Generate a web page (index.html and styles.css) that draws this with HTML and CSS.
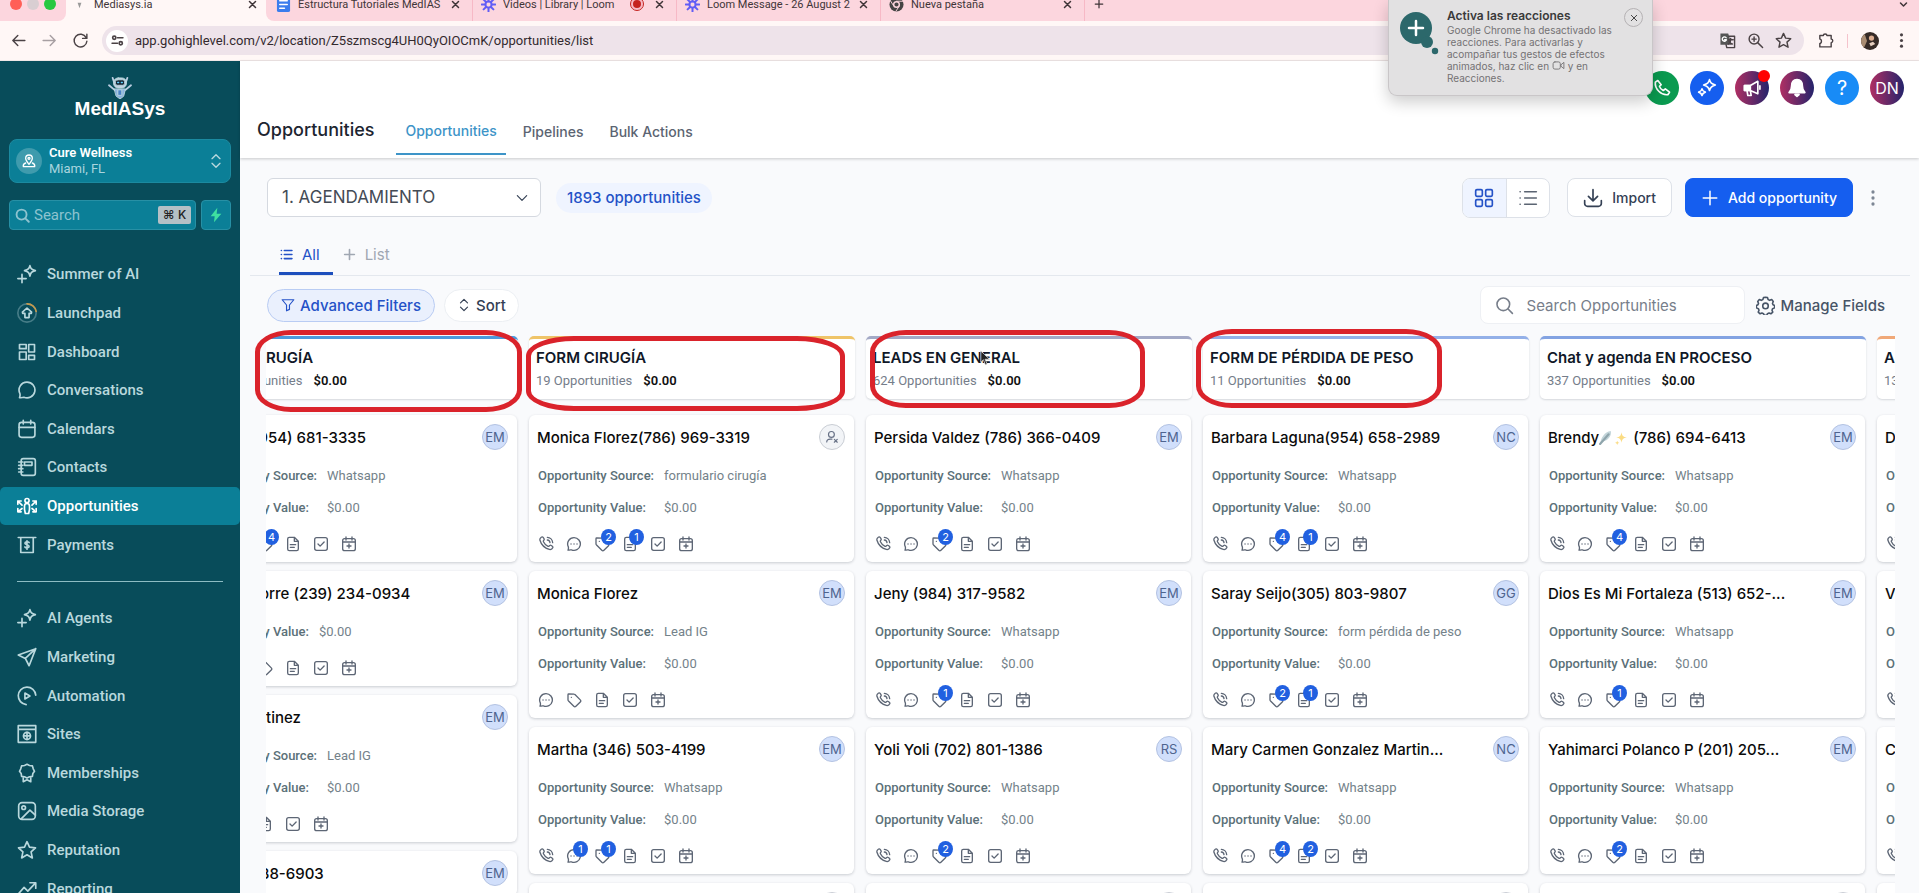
FILE: index.html
```html
<!DOCTYPE html>
<html lang="en">
<head>
<meta charset="utf-8">
<title>Mediasys.ia</title>
<link rel="stylesheet" href="styles.css">
</head>
<body>
<svg class="sprite" aria-hidden="true">
  <symbol id="phone" viewBox="0 0 24 24"><path d="M8.4 8.9a14 14 0 0 0 6.7 6.7c.6.1 1 0 1.500-.4l1-1c.8-.6 1.600-.5 2.300 0l1.600 1.200c1.200 1 1.100 2 0 3l-1 1c-1 .9-2.200 1.200-3.500.8A21 21 0 0 1 2.800 6c-.2-1.200.1-2.200 1-3l.9-.9c1-1 2.200-1 3 .1l1.300 1.800c.6.9.5 1.600-.2 2.300l-.6.7c-.4.6-.4 1.300.2 1.900zM14 2a8.500 8.500 0 0 1 8 8M14 6a4.500 4.500 0 0 1 4 4"/></symbol>
  <symbol id="chat" viewBox="0 0 24 24"><path d="M12 2.500a9.500 9.500 0 1 1-3.800 18.200c-1.700.2-3.200.6-5.200.6.7-1.800.9-3.300.5-5A9.500 9.500 0 0 1 12 2.500zM7.500 12h.1M12 12h.1M16.500 12h.1"/></symbol>
  <symbol id="tag" viewBox="0 0 24 24"><path d="M3 4a1 1 0 0 1 1-1l8 .2c.6 0 1 .2 1.400.6l8 8c1 1 1 2.200 0 3.200l-6.500 6.500c-1 1-2.200 1-3.200 0l-7.900-8A2 2 0 0 1 3 12zM8 8h.1"/></symbol>
  <symbol id="doc" viewBox="0 0 24 24"><path d="M14 2H6.500A2.500 2.500 0 0 0 4 4.500v15A2.500 2.500 0 0 0 6.500 22h11a2.500 2.500 0 0 0 2.500-2.500V8zM14 2v6h6M8 13h8M8 17h6"/></symbol>
  <symbol id="check" viewBox="0 0 24 24"><rect x="2.500" y="2.500" width="19" height="19" rx="3"/><path d="m7.500 12 3.200 3.200 6-6.200"/></symbol>
  <symbol id="calplus" viewBox="0 0 24 24"><rect x="2.500" y="4" width="19" height="18" rx="3"/><path d="M2.500 9h19M7.500 1.500V6M16.500 1.500V6M12 12v6M9 15h6"/></symbol>
  <symbol id="userx" viewBox="0 0 24 24"><circle cx="11" cy="7.500" r="5"/><path d="M3 20.500c0-3 2.500-5 6-5h3M16 16l5 5M21 16l-5 5"/></symbol>
  <symbol id="spark" viewBox="0 0 24 24"><path d="M15.500 2c1 3.800 2 4.800 6.500 6-4.500 1.200-5.500 2.200-6.500 6.500C14.500 10.200 13.500 9.200 9 8c4.500-1.200 5.500-2.200 6.500-6zM6 12.500v10M1 17.500h10"/></symbol>
  <symbol id="launch" viewBox="0 0 24 24"><circle cx="12" cy="12" r="11" opacity=".35"/><path d="M9.500 17.500v-5H6.800L6.500 11 12 6l5.500 5-.3 1.500h-2.700v5z"/><path class="arc" d="M12 1a11 11 0 0 1 11 9"/></symbol>
  <symbol id="dash" viewBox="0 0 24 24"><path d="M3 3h8v5H3zM3 12h8v9H3zM14 3h7v9h-7zM14 16h7v5h-7z"/></symbol>
  <symbol id="bubble" viewBox="0 0 24 24"><path d="M12 2.500a9.500 9.500 0 1 1-3.800 18.200c-1.700.2-3.200.6-5.200.6.7-1.800.9-3.300.5-5A9.500 9.500 0 0 1 12 2.500z"/></symbol>
  <symbol id="cal" viewBox="0 0 24 24"><rect x="2.500" y="4" width="19" height="18" rx="3"/><path d="M2.500 10h19M7.500 1.500V6M16.500 1.500V6"/></symbol>
  <symbol id="contacts" viewBox="0 0 24 24"><rect x="5" y="2" width="17" height="20" rx="2.500"/><path d="M9 6h9v4H9zM2 6h5M2 10h5M2 14h5M2 18h5"/></symbol>
  <symbol id="opps" viewBox="0 0 24 24"><circle cx="12" cy="5.500" r="2.500"/><path d="M9 12a3 3 0 0 1 6 0v4l-1 5h-4l-1-5zM1 10V6h4M1 6l5 5M23 10V6h-4M23 6l-5 5M1 15v4h4M1 19l5-4M23 15v4h-4M23 19l-5-4"/></symbol>
  <symbol id="pay" viewBox="0 0 24 24"><path d="M1.500 3h21M4.500 3v18h15V3M14.500 9c-1-1.300-5-1.200-5 .9 0 2.300 5 1.200 5 3.600 0 2.300-4 2.300-5 .8M12 7v10"/></symbol>
  <symbol id="send" viewBox="0 0 24 24"><path d="M22.500 2 1.500 9.500l8.500 4.200L14.500 22.500zM22.500 2 10 13.700"/></symbol>
  <symbol id="auto" viewBox="0 0 24 24"><path d="M11 22.300A10.500 10.500 0 1 1 22.500 11M9.500 8.500v7l6-3.500z"/></symbol>
  <symbol id="sites" viewBox="0 0 24 24"><path d="M1.500 2h21v20h-21zM1.500 6.500h21"/><circle cx="12" cy="14.300" r="4.200"/><path d="M8 14.300h8M12 10v8.500"/></symbol>
  <symbol id="award" viewBox="0 0 24 24"><path d="m12 1.500 3 1.500 3.500.5L19.500 7 21 10l-2 2.500-.5 3.500-3.500.5-3 1.500-3-1.500-3.500-.5-.5-3.500L3 10l1.500-3 1-3.500L9 3zM7.500 17v5.500L12 20l4.500 2.500V17"/></symbol>
  <symbol id="image" viewBox="0 0 24 24"><rect x="2" y="2" width="20" height="20" rx="4"/><circle cx="8" cy="8" r="2.200"/><path d="M5 21.500 15.500 11l6.500 6"/></symbol>
  <symbol id="star" viewBox="0 0 24 24"><path d="m12 2 3 6.600 7.200.8-5.300 4.900 1.500 7.200-6.400-3.700-6.400 3.700 1.500-7.200L1.800 9.400 9 8.600z"/></symbol>
  <symbol id="trend" viewBox="0 0 24 24"><path d="m1.500 18 7-8 4.500 4.500L22 5M15.500 4.500H22.500V11"/></symbol>
  <symbol id="x" viewBox="0 0 24 24"><path d="M4 4l16 16M20 4 4 20"/></symbol>
  <symbol id="plus" viewBox="0 0 24 24"><path d="M12 3v18M3 12h18"/></symbol>
  <symbol id="down" viewBox="0 0 24 24"><path d="m4 8 8 8 8-8"/></symbol>
  <symbol id="updown" viewBox="0 0 24 24"><path d="m6 8.500 6-6 6 6M6 15.500l6 6 6-6"/></symbol>
  <symbol id="mag" viewBox="0 0 24 24"><circle cx="10.500" cy="10.500" r="8"/><path d="m16.500 16.500 5.500 5.500"/></symbol>
  <symbol id="list" viewBox="0 0 24 24"><path d="M8 4.500h14M8 12h14M8 19.500h14M2.500 4.500h.1M2.500 12h.1M2.500 19.500h.1"/></symbol>
  <symbol id="dots" viewBox="0 0 24 24"><g fill="currentColor" stroke="none"><circle cx="12" cy="4" r="2.200"/><circle cx="12" cy="12" r="2.200"/><circle cx="12" cy="20" r="2.200"/></g></symbol>
  <symbol id="loom" viewBox="0 0 24 24"><g stroke-width="3.200"><path d="M12 1v6M12 17v6M1 12h6M17 12h6M4.200 4.200l4.300 4.300M15.500 15.500l4.300 4.300M19.800 4.200l-4.300 4.300M8.500 15.500l-4.300 4.300"/></g><circle cx="12" cy="12" r="5" stroke-width="3"/></symbol>
</svg>

<header class="browser">
  <div class="tabs">
    <div class="lights"><i class="red"></i><i class="grey"></i><i class="green"></i></div>
    <div class="tab active"><svg class="fav" viewBox="0 0 16 16"><path d="M6 6h4l-2 6z" fill="#9a9a9a" stroke="none"/></svg><span class="tab-t">Mediasys.ia</span><button class="tx" aria-label="Close tab"><svg><use href="#x"/></svg></button></div>
    <div class="tab"><svg class="fav" viewBox="0 0 16 16"><rect x="1" width="14" height="16" rx="2" fill="#3b7ded" stroke="none"/><path d="M4 4h8M4 8h8M4 12h5" stroke="#fff" stroke-width="1.600"/></svg><span class="tab-t">Estructura Tutoriales MedIAS</span><button class="tx" aria-label="Close tab"><svg><use href="#x"/></svg></button></div>
    <div class="tab"><svg class="fav loom"><use href="#loom"/></svg><span class="tab-t">Videos | Library | Loom</span><i class="rec"></i><button class="tx" aria-label="Close tab"><svg><use href="#x"/></svg></button></div>
    <div class="tab"><svg class="fav loom"><use href="#loom"/></svg><span class="tab-t">Loom Message - 26 August 2</span><button class="tx" aria-label="Close tab"><svg><use href="#x"/></svg></button></div>
    <div class="tab"><svg class="fav" viewBox="0 0 16 16"><circle cx="8" cy="8" r="7.500" fill="#444" stroke="none"/><circle cx="8" cy="8" r="3" fill="#444" stroke="#fcd6de" stroke-width="1.500"/><path d="M8 4.500h7M5 9.500 1.500 4M11 9.500 7.500 15" stroke="#fcd6de" stroke-width="1"/></svg><span class="tab-t">Nueva pestaña</span><button class="tx" aria-label="Close tab"><svg><use href="#x"/></svg></button></div>
    <button class="newtab" aria-label="New tab"><svg><use href="#plus"/></svg></button>
    <button class="tabmenu" aria-label="Search tabs"><svg><use href="#down"/></svg></button>
  </div>
  <div class="bar">
    <button aria-label="Back"><svg viewBox="0 0 24 24"><path d="M21 12H4M11 5l-7 7 7 7"/></svg></button>
    <button class="dim" aria-label="Forward"><svg viewBox="0 0 24 24"><path d="M3 12h17M13 5l7 7-7 7"/></svg></button>
    <button aria-label="Reload"><svg viewBox="0 0 24 24"><path d="M20 8a9 9 0 1 0 1 5M21 3v6h-6"/></svg></button>
    <div class="url">
      <span class="site"><svg viewBox="0 0 24 24"><circle cx="6" cy="7" r="3"/><path d="M12 7h10M2 17h10"/><circle cx="18" cy="17" r="3"/></svg></span>
      <input aria-label="Address" value="app.gohighlevel.com/v2/location/Z5szmscg4UH0QyOIOCmK/opportunities/list">
      <svg viewBox="0 0 24 24"><path d="M2 2h11l5 16H2z" fill="#555" stroke="none"/><path d="M14 6h8v16H11l-1-4M13 11h7M16.500 9v2c0 3-2 5-3.500 6M14 13c1 2 3 4 5 4"/><path d="M10 8a3 3 0 1 0 .5 3H8" stroke="#fff"/></svg>
      <svg viewBox="0 0 24 24"><circle cx="10" cy="10" r="7"/><path d="m15 15 7 7M10 7v6M7 10h6"/></svg>
      <svg><use href="#star"/></svg>
    </div>
    <svg class="ext" viewBox="0 0 24 24"><path d="M4 5h5c0-3 5-3 5 0h6v5c3 0 3 5 0 5v6H4v-5c3 0 3-6 0-6z"/></svg>
    <i class="vsep"></i>
    <svg class="me" viewBox="0 0 24 24"><circle cx="12" cy="12" r="12" fill="#352a26"/><path d="M0 12a12 12 0 0 1 5-9l3 9-4 9a12 12 0 0 1-4-9z" fill="#a98c72"/><circle cx="14" cy="8" r="3.500" fill="#dcae91"/><path d="M11 15l5-2 3 3-6 3z" fill="#e6cfc0"/></svg>
    <button aria-label="Menu"><svg><use href="#dots"/></svg></button>
  </div>
</header>

<div class="app">
  <aside class="side">
    <div class="logo">
      <svg viewBox="0 0 26 24"><path d="M5 1l2 6M21 1l-2 6M1 9l6 5M25 9l-6 5" stroke="#b9cce0" stroke-width="2"/><rect x="6" y="1" width="14" height="11" rx="5" fill="#c3d2e4"/><rect x="8" y="3" width="10" height="6" rx="2" fill="#182736"/><path d="M10.500 6h1M14.500 6h1" stroke="#5fd0ff" stroke-width="1.500"/><path d="M7 13h12l-2 8-4 3-4-3z" fill="#8cb2df"/><path d="M11 14h4v6h-4z" fill="#4b82c6"/></svg>
      <span>MedIASys</span>
    </div>
    <button class="account">
      <span class="pinc"><svg viewBox="0 0 24 24"><path d="M12 17c-3-3.500-5-6-5-9a5 5 0 0 1 10 0c0 3-2 5.500-5 9z"/><circle cx="12" cy="8" r="1.500"/><path d="M7 15c-3 1-4 3-3.500 5.500h17C21 18 20 16 17 15"/></svg></span>
      <span class="acc"><b>Cure Wellness</b><small>Miami, FL</small></span>
      <svg class="ud"><use href="#updown"/></svg>
    </button>
    <div class="find">
      <label class="sbox"><svg><use href="#mag"/></svg><input placeholder="Search" aria-label="Search"><kbd>⌘ K</kbd></label>
      <button class="bolt" aria-label="Quick actions"><svg viewBox="0 0 24 24"><path d="M14 1 4 14h6l-1 9L20 10h-7z" fill="#3fe0a0" stroke="none"/></svg></button>
    </div>
    <nav class="nav">
      <a href="#"><svg><use href="#spark"/></svg>Summer of AI</a>
      <a href="#"><svg><use href="#launch"/></svg>Launchpad</a>
      <a href="#"><svg><use href="#dash"/></svg>Dashboard</a>
      <a href="#"><svg><use href="#bubble"/></svg>Conversations</a>
      <a href="#"><svg><use href="#cal"/></svg>Calendars</a>
      <a href="#"><svg><use href="#contacts"/></svg>Contacts</a>
      <a href="#" class="on"><svg><use href="#opps"/></svg>Opportunities</a>
      <a href="#"><svg><use href="#pay"/></svg>Payments</a>
    </nav>
    <hr>
    <nav class="nav">
      <a href="#"><svg><use href="#spark"/></svg>AI Agents</a>
      <a href="#"><svg><use href="#send"/></svg>Marketing</a>
      <a href="#"><svg><use href="#auto"/></svg>Automation</a>
      <a href="#"><svg><use href="#sites"/></svg>Sites</a>
      <a href="#"><svg><use href="#award"/></svg>Memberships</a>
      <a href="#"><svg><use href="#image"/></svg>Media Storage</a>
      <a href="#"><svg><use href="#star"/></svg>Reputation</a>
      <a href="#"><svg><use href="#trend"/></svg>Reporting</a>
    </nav>
  </aside>

  <main>
    <div class="top">
      <div class="circles">
        <button class="c green" aria-label="Phone"><svg viewBox="0 0 24 24"><path d="M7 3 4 5c-1 8 7 16 15 15l2-3-5-4-2.500 2C11 13.500 9.500 12 9 10l2-2z"/></svg></button>
        <button class="c blue" aria-label="AI"><svg viewBox="0 0 24 24"><path d="M15 2c1 4 2.500 5 7 6.500-4.500 1.500-6 2.500-7 6.500-1-4-2.500-5-7-6.500C12.500 7 14 6 15 2zM6 13c.6 2.500 1.500 3.200 4 4-2.500.8-3.400 1.500-4 4-.6-2.500-1.500-3.200-4-4 2.500-.8 3.400-1.500 4-4z"/></svg></button>
        <button class="c grad" aria-label="News"><svg viewBox="0 0 24 24"><path d="M3 9h7l9-5v15l-9-4H3zM6 15l1 6h4l-1-6M21.500 9.500v4" /><path d="M3 9h7v6H3z" fill="#fff"/></svg><i></i></button>
        <button class="c grad" aria-label="Notifications"><svg viewBox="0 0 24 24"><path d="M12 2c-5 0-6.500 4-6.500 8 0 4-1.500 5-3 7.500h19c-1.500-2.500-3-3.500-3-7.500 0-4-1.500-8-6.500-8zM9.500 20h5l-2.500 2z" fill="#fff"/></svg></button>
        <button class="c sky" aria-label="Help">?</button>
        <button class="c grad" aria-label="Account">DN</button>
      </div>
      <div class="heads">
        <h1>Opportunities</h1>
        <a href="#" class="on">Opportunities</a><a href="#">Pipelines</a><a href="#">Bulk Actions</a>
      </div>
    </div>

    <div class="tools">
      <div class="sel"><select aria-label="Pipeline"><option>1. AGENDAMIENTO</option></select><svg><use href="#down"/></svg></div>
      <span class="count">1893 opportunities</span>
      <div class="toggle"><button class="on" aria-label="Board"><svg viewBox="0 0 24 24"><rect x="2" y="2" width="8" height="8" rx="1.500"/><rect x="14" y="2" width="8" height="8" rx="1.500"/><rect x="2" y="14" width="8" height="8" rx="1.500"/><rect x="14" y="14" width="8" height="8" rx="1.500"/></svg></button><button aria-label="List view"><svg><use href="#list"/></svg></button></div>
      <button class="btn"><svg viewBox="0 0 24 24"><path d="M12 2v13M6.500 10l5.500 5.500 5.500-5.500M2 15v3.500A3.500 3.500 0 0 0 5.500 22h13a3.500 3.500 0 0 0 3.500-3.500V15"/></svg>Import</button>
      <button class="btn primary"><svg><use href="#plus"/></svg>Add opportunity</button>
      <button class="kebab" aria-label="More"><svg><use href="#dots"/></svg></button>
    </div>

    <div class="views">
      <a href="#" class="on"><svg><use href="#list"/></svg>All</a>
      <a href="#"><svg><use href="#plus"/></svg>List</a>
    </div>

    <div class="filters">
      <button class="pill on"><svg viewBox="0 0 24 24"><path d="M2 3h20l-7.500 9v7.500L9.500 22V12z"/></svg>Advanced Filters</button>
      <button class="pill"><svg><use href="#updown"/></svg>Sort</button>
      <label class="osearch"><svg><use href="#mag"/></svg><input placeholder="Search Opportunities" aria-label="Search Opportunities"></label>
      <button class="manage"><svg viewBox="0 0 24 24"><path d="m12 1.500 2.500.5.800 2.500 2 1 2.500-1 2 2.500-1 2.500.7 1.500 2 1v3l-2.500 1-.8 2 1 2.300-2.400 2.200-2.300-1-2 .8-1 2.200h-3l-1-2.200-2-.8-2.300 1-2.400-2.200 1-2.300-.8-2-2.500-1v-3l2-1 .7-1.500-1-2.500 2-2.500 2.500 1 2-1L9.500 2z"/><circle cx="12" cy="12.500" r="3.500"/></svg>Manage Fields</button>
    </div>

    <div class="board">
      <section class="col cut">
        <header class="s1"><h2>RUGÍA</h2><p><span>Opportunities</span><b>$0.00</b></p></header>
        <article><div class="row"><h3 class="n1">(954) 681-3335</h3><i class="av">EM</i></div>
          <dl><dt>Opportunity Source:</dt><dd>Whatsapp</dd><dt>Opportunity Value:</dt><dd>$0.00</dd></dl>
          <div class="ic"><span><svg><use href="#phone"/></svg></span><span><svg><use href="#chat"/></svg></span><span><svg><use href="#tag"/></svg><b>4</b></span><span><svg><use href="#doc"/></svg></span><span><svg><use href="#check"/></svg></span><span><svg><use href="#calplus"/></svg></span></div></article>
        <article><div class="row"><h3 class="n2">orre (239) 234-0934</h3><i class="av">EM</i></div>
          <dl><dt>Opportunity Value:</dt><dd>$0.00</dd></dl>
          <div class="ic"><span><svg><use href="#phone"/></svg></span><span><svg><use href="#chat"/></svg></span><span><svg><use href="#tag"/></svg></span><span><svg><use href="#doc"/></svg></span><span><svg><use href="#check"/></svg></span><span><svg><use href="#calplus"/></svg></span></div></article>
        <article><div class="row"><h3 class="n2">rtinez</h3><i class="av">EM</i></div>
          <dl><dt>Opportunity Source:</dt><dd>Lead IG</dd><dt>Opportunity Value:</dt><dd>$0.00</dd></dl>
          <div class="ic"><span><svg><use href="#chat"/></svg></span><span><svg><use href="#tag"/></svg></span><span><svg><use href="#doc"/></svg></span><span><svg><use href="#check"/></svg></span><span><svg><use href="#calplus"/></svg></span></div></article>
        <article><div class="row"><h3 class="n2">38-6903</h3><i class="av">EM</i></div></article>
      </section>

      <section class="col">
        <header class="s2"><h2>FORM CIRUGÍA</h2><p><span>19 Opportunities</span><b>$0.00</b></p></header>
        <article><div class="row"><h3>Monica Florez(786) 969-3319</h3><i class="av none"><svg><use href="#userx"/></svg></i></div>
          <dl><dt>Opportunity Source:</dt><dd>formulario cirugía</dd><dt>Opportunity Value:</dt><dd>$0.00</dd></dl>
          <div class="ic"><span><svg><use href="#phone"/></svg></span><span><svg><use href="#chat"/></svg></span><span><svg><use href="#tag"/></svg><b>2</b></span><span><svg><use href="#doc"/></svg><b>1</b></span><span><svg><use href="#check"/></svg></span><span><svg><use href="#calplus"/></svg></span></div></article>
        <article><div class="row"><h3>Monica Florez</h3><i class="av">EM</i></div>
          <dl><dt>Opportunity Source:</dt><dd>Lead IG</dd><dt>Opportunity Value:</dt><dd>$0.00</dd></dl>
          <div class="ic"><span><svg><use href="#chat"/></svg></span><span><svg><use href="#tag"/></svg></span><span><svg><use href="#doc"/></svg></span><span><svg><use href="#check"/></svg></span><span><svg><use href="#calplus"/></svg></span></div></article>
        <article><div class="row"><h3>Martha (346) 503-4199</h3><i class="av">EM</i></div>
          <dl><dt>Opportunity Source:</dt><dd>Whatsapp</dd><dt>Opportunity Value:</dt><dd>$0.00</dd></dl>
          <div class="ic"><span><svg><use href="#phone"/></svg></span><span><svg><use href="#chat"/></svg><b>1</b></span><span><svg><use href="#tag"/></svg><b>1</b></span><span><svg><use href="#doc"/></svg></span><span><svg><use href="#check"/></svg></span><span><svg><use href="#calplus"/></svg></span></div></article>
        <article><div class="row"><i class="av none"></i></div></article>
      </section>

      <section class="col">
        <header class="s3"><h2>LEADS EN GENERAL</h2><p><span>624 Opportunities</span><b>$0.00</b></p></header>
        <article><div class="row"><h3>Persida Valdez (786) 366-0409</h3><i class="av">EM</i></div>
          <dl><dt>Opportunity Source:</dt><dd>Whatsapp</dd><dt>Opportunity Value:</dt><dd>$0.00</dd></dl>
          <div class="ic"><span><svg><use href="#phone"/></svg></span><span><svg><use href="#chat"/></svg></span><span><svg><use href="#tag"/></svg><b>2</b></span><span><svg><use href="#doc"/></svg></span><span><svg><use href="#check"/></svg></span><span><svg><use href="#calplus"/></svg></span></div></article>
        <article><div class="row"><h3>Jeny (984) 317-9582</h3><i class="av">EM</i></div>
          <dl><dt>Opportunity Source:</dt><dd>Whatsapp</dd><dt>Opportunity Value:</dt><dd>$0.00</dd></dl>
          <div class="ic"><span><svg><use href="#phone"/></svg></span><span><svg><use href="#chat"/></svg></span><span><svg><use href="#tag"/></svg><b>1</b></span><span><svg><use href="#doc"/></svg></span><span><svg><use href="#check"/></svg></span><span><svg><use href="#calplus"/></svg></span></div></article>
        <article><div class="row"><h3>Yoli Yoli (702) 801-1386</h3><i class="av">RS</i></div>
          <dl><dt>Opportunity Source:</dt><dd>Whatsapp</dd><dt>Opportunity Value:</dt><dd>$0.00</dd></dl>
          <div class="ic"><span><svg><use href="#phone"/></svg></span><span><svg><use href="#chat"/></svg></span><span><svg><use href="#tag"/></svg><b>2</b></span><span><svg><use href="#doc"/></svg></span><span><svg><use href="#check"/></svg></span><span><svg><use href="#calplus"/></svg></span></div></article>
        <article><div class="row"><i class="av none"></i></div></article>
      </section>

      <section class="col">
        <header class="s4"><h2>FORM DE PÉRDIDA DE PESO</h2><p><span>11 Opportunities</span><b>$0.00</b></p></header>
        <article><div class="row"><h3>Barbara Laguna(954) 658-2989</h3><i class="av">NC</i></div>
          <dl><dt>Opportunity Source:</dt><dd>Whatsapp</dd><dt>Opportunity Value:</dt><dd>$0.00</dd></dl>
          <div class="ic"><span><svg><use href="#phone"/></svg></span><span><svg><use href="#chat"/></svg></span><span><svg><use href="#tag"/></svg><b>4</b></span><span><svg><use href="#doc"/></svg><b>1</b></span><span><svg><use href="#check"/></svg></span><span><svg><use href="#calplus"/></svg></span></div></article>
        <article><div class="row"><h3>Saray Seijo(305) 803-9807</h3><i class="av">GG</i></div>
          <dl><dt>Opportunity Source:</dt><dd>form pérdida de peso</dd><dt>Opportunity Value:</dt><dd>$0.00</dd></dl>
          <div class="ic"><span><svg><use href="#phone"/></svg></span><span><svg><use href="#chat"/></svg></span><span><svg><use href="#tag"/></svg><b>2</b></span><span><svg><use href="#doc"/></svg><b>1</b></span><span><svg><use href="#check"/></svg></span><span><svg><use href="#calplus"/></svg></span></div></article>
        <article><div class="row"><h3>Mary Carmen Gonzalez Martin...</h3><i class="av">NC</i></div>
          <dl><dt>Opportunity Source:</dt><dd>Whatsapp</dd><dt>Opportunity Value:</dt><dd>$0.00</dd></dl>
          <div class="ic"><span><svg><use href="#phone"/></svg></span><span><svg><use href="#chat"/></svg></span><span><svg><use href="#tag"/></svg><b>4</b></span><span><svg><use href="#doc"/></svg><b>2</b></span><span><svg><use href="#check"/></svg></span><span><svg><use href="#calplus"/></svg></span></div></article>
        <article><div class="row"><i class="av none"></i></div></article>
      </section>

      <section class="col">
        <header class="s5"><h2>Chat y agenda EN PROCESO</h2><p><span>337 Opportunities</span><b>$0.00</b></p></header>
        <article><div class="row"><h3>Brendy<svg class="emo" viewBox="0 0 28 14"><path d="M1 13C2 7 5 2 11 1c1 4-2 9-8 10z" fill="#c3d5da"/><path d="m1 13 8-9" stroke="#8fa5ac"/><path d="M21 2c.6 3.500 1.500 4.400 5 5-3.500.6-4.400 1.500-5 5-.6-3.500-1.500-4.400-5-5 3.500-.6 4.400-1.500 5-5zM17 10l.6 1.500 1.400.5-1.400.5L17 14l-.6-1.500L15 12l1.400-.5z" fill="#fbdc83"/></svg> (786) 694-6413</h3><i class="av">EM</i></div>
          <dl><dt>Opportunity Source:</dt><dd>Whatsapp</dd><dt>Opportunity Value:</dt><dd>$0.00</dd></dl>
          <div class="ic"><span><svg><use href="#phone"/></svg></span><span><svg><use href="#chat"/></svg></span><span><svg><use href="#tag"/></svg><b>4</b></span><span><svg><use href="#doc"/></svg></span><span><svg><use href="#check"/></svg></span><span><svg><use href="#calplus"/></svg></span></div></article>
        <article><div class="row"><h3>Dios Es Mi Fortaleza (513) 652-...</h3><i class="av">EM</i></div>
          <dl><dt>Opportunity Source:</dt><dd>Whatsapp</dd><dt>Opportunity Value:</dt><dd>$0.00</dd></dl>
          <div class="ic"><span><svg><use href="#phone"/></svg></span><span><svg><use href="#chat"/></svg></span><span><svg><use href="#tag"/></svg><b>1</b></span><span><svg><use href="#doc"/></svg></span><span><svg><use href="#check"/></svg></span><span><svg><use href="#calplus"/></svg></span></div></article>
        <article><div class="row"><h3>Yahimarci Polanco P (201) 205...</h3><i class="av">EM</i></div>
          <dl><dt>Opportunity Source:</dt><dd>Whatsapp</dd><dt>Opportunity Value:</dt><dd>$0.00</dd></dl>
          <div class="ic"><span><svg><use href="#phone"/></svg></span><span><svg><use href="#chat"/></svg></span><span><svg><use href="#tag"/></svg><b>2</b></span><span><svg><use href="#doc"/></svg></span><span><svg><use href="#check"/></svg></span><span><svg><use href="#calplus"/></svg></span></div></article>
        <article><div class="row"><i class="av none"></i></div></article>
      </section>

      <section class="col">
        <header class="s6"><h2>A</h2><p><span>13</span></p></header>
        <article><div class="row"><h3>D</h3></div>
          <dl><dt>Opportunity Source:</dt><dd></dd><dt>Opportunity Value:</dt><dd></dd></dl>
          <div class="ic"><span><svg><use href="#phone"/></svg></span></div></article>
        <article><div class="row"><h3>V</h3></div>
          <dl><dt>Opportunity Source:</dt><dd></dd><dt>Opportunity Value:</dt><dd></dd></dl>
          <div class="ic"><span><svg><use href="#phone"/></svg></span></div></article>
        <article><div class="row"><h3>C</h3></div>
          <dl><dt>Opportunity Source:</dt><dd></dd><dt>Opportunity Value:</dt><dd></dd></dl>
          <div class="ic"><span><svg><use href="#phone"/></svg></span></div></article>
        <article><div class="row"></div></article>
      </section>
    </div>
  </main>
</div>

<i class="mark m1"></i><i class="mark m2"></i><i class="mark m3"></i><i class="mark m4"></i>
<svg class="cursor" viewBox="0 0 12 18"><path d="M1 1v13l3-3 2.500 6 2-1L6 10.500h5z" fill="#222"/></svg>

<aside class="toast">
  <svg class="ti" viewBox="0 0 40 48"><circle cx="17" cy="20" r="16" fill="#2c686b"/><circle cx="28" cy="34" r="6" fill="#2c686b"/><circle cx="36" cy="43" r="3.200" fill="#2c686b"/><path d="M17 13v14M10 20h14" stroke="#fff" stroke-width="2.500"/></svg>
  <div><strong>Activa las reacciones</strong><p>Google Chrome ha desactivado las<br>reacciones. Para activarlas y<br>acompañar tus gestos de efectos<br>animados, haz clic en <svg viewBox="0 0 14 10"><rect x="1" y="1" width="8" height="8" rx="2"/><path d="M10 4l3-2.500v7L10 6z"/></svg> y en<br>Reacciones.</p></div>
  <button aria-label="Cerrar"><svg><use href="#x"/></svg></button>
</aside>
</body>
</html>
```
FILE: styles.css
```css
* { box-sizing: border-box; }
html, body { height: 100%; margin: 0; overflow: hidden; }
body { display: flex; flex-direction: column; font-family: Inter, "Noto Sans", sans-serif; font-size: 16px; color: #101828; background: #f9fafc; }
svg { width: 16px; height: 16px; flex: none; fill: none; stroke: currentColor; stroke-width: 2; stroke-linecap: round; stroke-linejoin: round; }
button { font: inherit; color: inherit; border: 0; padding: 0; background: none; display: flex; align-items: center; justify-content: center; flex: none; }
input, select { font: inherit; color: inherit; border: 0; padding: 0; background: none; outline: 0; min-width: 0; }
a { color: inherit; text-decoration: none; }
i { font-style: normal; }
h1, h2, h3, p, dl, dd { margin: 0; }
.sprite { position: absolute; width: 0; height: 0; }

/* Browser chrome */
.browser { flex: none; font-family: Roboto, sans-serif; background: #fff7f6; }
.tabs { display: flex; align-items: flex-end; height: 21px; overflow: hidden; color: #3f3538; font-size: 11px; }
.lights, .tab, .newtab, .tabmenu { height: 34px; display: flex; align-items: center; background: #fcd6de; flex: none; }
.lights { width: 66px; padding-left: 10px; gap: 5px; border-radius: 0 0 8px 0; }
.lights i { width: 12px; height: 12px; border-radius: 50%; }
.lights .red { background: #ff5f57; }
.lights .grey { background: #d9ced2; }
.lights .green { background: #28c840; }
.tab { width: 204px; padding: 0 12px 0 8px; gap: 7px; }
.tab.active { width: 200px; background: #fff7f6; padding: 0 9px 0 6px; }
.tab.active + .tab { border-radius: 0 0 0 8px; width: 206px; padding-left: 10px; }
.tab + .tab + .tab { border-left: 1px solid #f7b9c6; }
.tab-t { flex: 1; white-space: nowrap; overflow: hidden; }
.fav { width: 15px; height: 15px; }
.fav.loom { color: #625df5; }
.rec { width: 12px; height: 12px; border-radius: 50%; background: #c5221f; border: 2px solid #f7b9c6; outline: 1px solid #c5221f; margin-right: 5px; }
.tx svg { width: 9px; height: 9px; stroke-width: 4; }
.newtab { flex: 1; justify-content: flex-start; padding-left: 9px; border-left: 1px solid #f7b9c6; }
.newtab svg { width: 10px; height: 10px; stroke-width: 3; }
.tabmenu { width: 32px; }
.tabmenu svg { width: 9px; height: 9px; stroke-width: 4; }
.bar { height: 40px; display: flex; align-items: center; padding: 0 9px 0 9px; gap: 13px; color: #4a4245; border-bottom: 1px solid #efe6e6; }
.bar svg { width: 17px; height: 17px; }
.bar button { width: 18px; }
.bar .dim { color: #a79fa2; }
.url { flex: 1; height: 29px; display: flex; align-items: center; gap: 11px; background: #eee3ea; border-radius: 15px; padding: 0 12px 0 4px; }
.url input { flex: 1; font-size: 13px; color: #33292e; margin-left: -4px; }
.site { width: 22px; height: 22px; border-radius: 50%; background: #fff; display: flex; align-items: center; justify-content: center; }
.site svg { width: 13px; height: 13px; stroke-width: 3; }
.vsep { width: 1px; height: 14px; background: #f5c3cc; }
.bar .me { width: 18px; height: 18px; stroke: none; }

/* App frame */
.app { flex: 1; display: flex; min-height: 0; }
.side { flex: none; width: 240px; background: #084c5a; font-family: Roboto, sans-serif; color: #b9d8dd; overflow: hidden; }
.logo { height: 78px; padding-top: 16px; display: flex; flex-direction: column; align-items: center; }
.logo svg { width: 26px; height: 22px; stroke-width: 1; }
.logo span { font: 700 19px/20px "Liberation Sans", sans-serif; color: #fff; }
.account { width: 222px; height: 44px; margin: 0 9px; padding: 0 6px; gap: 7px; border-radius: 8px; background: #0b7f97; text-align: left; border: 1px solid #1b8aa0; }
.pinc { width: 26px; height: 26px; border-radius: 50%; background: #3f9bad; display: flex; align-items: center; justify-content: center; color: #fff; }
.acc { flex: 1; display: flex; flex-direction: column; }
.acc b { font-size: 13px; line-height: 16px; font-weight: 600; color: #fff; }
.acc small { font-size: 13px; line-height: 16px; color: #a9d5de; }
.find { display: flex; gap: 5px; margin: 17px 9px 25px; color: #8dc3cf; }
.sbox, .bolt { height: 30px; border: 1px solid #2790a5; background: #0b7f97; border-radius: 4px; }
.sbox { flex: 1; display: flex; align-items: center; gap: 4px; padding: 0 4px 0 5px; min-width: 0; }
.sbox input { flex: 1; width: 60px; font-size: 15px; }
.sbox input::placeholder { color: #8dc3cf; }
.sbox svg { stroke-width: 3; width: 15px; height: 15px; }
.sbox kbd { width: 33px; height: 18px; font: 500 12px/18px Inter, sans-serif; text-align: center; color: #222; background: #b4c0c6; border-radius: 2px; }
.bolt { width: 30px; }
.nav { display: grid; grid-auto-rows: 1fr; height: 309px; font-size: 15px; font-weight: 500; }
.nav a { display: flex; align-items: center; gap: 10px; padding-left: 17px; }
.nav svg { width: 20px; height: 20px; }
.nav .on { background: #0b7f97; color: #fff; border-radius: 5px; }
.arc { stroke: #c79a4d; }
.side hr { margin: 17px 17px; border: 0; height: 1px; background: #8dbcc3; }

main { flex: 1; min-width: 0; display: flex; flex-direction: column; }
.top { flex: none; height: 97px; background: #fff; box-shadow: 0 1px 3px #0003; position: relative; display: flex; flex-direction: column; }
.circles { display: flex; justify-content: flex-end; gap: 11px; padding: 10px 15px 0 0; }
.c { width: 34px; height: 34px; border-radius: 50%; color: #fff; position: relative; }
.c svg { width: 20px; height: 20px; }
.c i { position: absolute; right: -1px; top: -1px; width: 12px; height: 12px; border-radius: 50%; background: #f00; }
.green { background: #0a9a50; }
.blue { background: #155eef; }
.grad { background: linear-gradient(90deg, #b02f63, #25236b); }
.sky { background: #188bf6; font-size: 20px; }
.heads { display: flex; align-items: flex-end; gap: 8px; padding-left: 17px; margin-top: auto; height: 50px; font-size: 14px; font-weight: 500; color: #5b6472; }
.heads h1 { font-size: 18px; line-height: 24px; font-weight: 500; color: #1d2530; margin-right: 14px; padding-bottom: 16px; }
.heads a { height: 47px; padding: 11px 9px 0; line-height: 20px; }
.heads .on { color: #3d94c8; border-bottom: 2px solid #3d94c8; margin-bottom: 3px; height: 44px; padding-top: 10px; }

.tools { display: flex; align-items: center; padding: 19px 37px 0 27px; height: 60px; color: #344054; }
.sel { width: 274px; height: 39px; position: relative; }
.sel select { appearance: none; width: 100%; height: 100%; padding: 0 14px 2px; background: #fff; border: 1px solid #d5d9e0; border-radius: 6px; font-size: 17px; color: #444b55; }
.sel svg { position: absolute; right: 12px; top: 13px; width: 14px; height: 14px; }
.count { margin: 0 auto 0 15px; padding: 0 11px; line-height: 30px; border-radius: 15px; background: #eff4ff; color: #2452c7; font-weight: 500; font-size: 15px; }
.toggle { display: flex; width: 88px; height: 40px; border: 1px solid #dde1e8; border-radius: 8px; overflow: hidden; background: #fff; margin-right: 17px; color: #5b6472; }
.toggle button { flex: 1; }
.toggle .on { background: #eff4ff; color: #2452c7; border-right: 1px solid #dde1e8; }
.toggle svg, .btn svg { width: 20px; height: 20px; }
.btn { height: 39px; padding: 0 15px; gap: 9px; border: 1px solid #dde1e8; border-radius: 8px; background: #fff; font-weight: 500; font-size: 14px; margin-right: 13px; }
.btn.primary { background: #155eef; border-color: #155eef; color: #fff; margin-right: 11px; }
.btn.primary svg { width: 18px; height: 18px; }
.kebab { color: #7d8694; }
.kebab svg { width: 18px; height: 18px; }

.views { display: flex; align-items: stretch; height: 39px; margin: 19px 9px 0 10px; padding-left: 29px; border-bottom: 1px solid #e4e8ee; font-size: 15px; color: #a0a7b2; }
.views a { display: flex; align-items: center; gap: 9px; padding: 0 10px 4px; }
.views svg { width: 13px; height: 13px; stroke-width: 3; }
.views .on { color: #2452c7; border-bottom: 3px solid #1d4fbd; padding: 0 13px 1px 1px; }

.filters { display: flex; align-items: center; height: 60px; padding: 0 34px 2px 27px; }
.pill { height: 33px; padding: 0 12px; gap: 5px; border-radius: 17px; background: #fff; border: 1px solid #eceff3; font-size: 15px; font-weight: 500; color: #344054; margin-left: 9px; }
.pill.on { background: #eaf0fd; border-color: #b9ccf3; color: #2452c7; margin-left: 0; padding: 0 13px; }
.pill svg { width: 14px; height: 14px; }
.osearch { margin: 0 11px 0 auto; width: 265px; height: 38px; display: flex; align-items: center; gap: 13px; padding: 0 14px; background: #fff; border: 1px solid #eef0f4; border-radius: 8px; color: #777e8a; }
.osearch input { flex: 1; font-size: 15px; }
.osearch input::placeholder { color: #777e8a; opacity: 1; }
.osearch svg { width: 19px; height: 19px; }
.manage { gap: 6px; font-size: 15px; font-weight: 500; color: #475467; }
.manage svg { width: 19px; height: 19px; }

/* Kanban board, scrolled part of the way through its first column */
.board { flex: 1; min-height: 0; display: flex; gap: 11px; margin: 0 24px 0 26px; overflow: hidden; }
.col { flex: none; width: 326px; }
.cut { margin-left: -74px; }
.col header { height: 63px; padding: 8px 7px; margin-bottom: 16px; background: #fff; border-top: 3px solid; border-radius: 5px; box-shadow: 0 1px 2px #10182826; }
.col h2 { font-size: 15px; line-height: 22px; font-weight: 600; color: #101828; white-space: nowrap; }
.col p { display: flex; gap: 11px; font: 400 13px/24px Roboto, sans-serif; color: #757d8a; white-space: nowrap; }
.col p b { color: #101010; font-weight: 600; }
.col .s1 { border-color: #4c9add; } .col .s2 { border-color: #efc468; } .col .s3 { border-color: #a3a9c6; }
.col .s4 { border-color: #93b0e8; } .col .s5 { border-color: #83a3e2; } .col .s6 { border-color: #f0a878; }
article { background: #fff; border-radius: 6px; box-shadow: 0 1px 3px #10182833; padding: 9px 9px 10px 8px; margin: 0 1px 9px 0; }
.row { display: flex; justify-content: space-between; align-items: center; height: 26px; }
.row > .av:only-child { margin-left: auto; }
h3 { font-size: 15px; font-weight: 500; color: #0b0b0b; white-space: nowrap; }
.av { width: 26px; height: 26px; border-radius: 50%; border: 1px solid #b3c2e2; background: #d1dffb; color: #4f648f; font-size: 13px; display: flex; align-items: center; justify-content: center; flex: none; }
.av.none { background: #f2f4f7; border-color: #c9cdd4; color: #667085; }
.av svg { width: 14px; height: 14px; }
dl { display: grid; grid-template-columns: max-content 1fr; column-gap: 10px; padding: 10px 0 0 1px; font: 400 13px/32px Roboto, sans-serif; color: #74828a; white-space: nowrap; }
dt { font-weight: 500; color: #5b7078; }
.ic { display: flex; gap: 12px; padding: 12px 0 0 1px; color: #5d6675; height: 28px; }
.ic span { position: relative; width: 16px; height: 16px; }
.ic b { position: absolute; left: 7px; top: -7px; width: 15px; height: 16px; border-radius: 50%; background: #2160e0; color: #fff; font: 400 11px/16px Inter, sans-serif; text-align: center; }
.emo { width: 30px; height: 15px; stroke: none; vertical-align: -2px; }
.cut h2 { padding-left: 67px; }
.cut header p { padding-left: 25px; }
.n1 { padding-left: 53px; }
.n2 { padding-left: 60px; }

/* Annotations drawn over the board */
.mark { position: absolute; border: 5px solid #da232b; border-radius: 36px / 22px; }
.m1 { left: 255px; top: 330px; width: 267px; height: 82px; }
.m2 { left: 526px; top: 336px; width: 319px; height: 75px; border-radius: 48px / 20px; }
.m3 { left: 870px; top: 330px; width: 275px; height: 78px; }
.m4 { left: 1196px; top: 329px; width: 246px; height: 79px; }
.cursor { position: absolute; left: 980px; top: 350px; width: 10px; height: 16px; stroke: #ccc; stroke-width: 1; }

.toast { position: absolute; right: 266px; top: 0; width: 265px; height: 96px; display: flex; padding: 8px 9px 0 10px; background: #e2e1e2; border: 1px solid #c9c6c8; border-top: 0; border-radius: 0 0 9px 9px; box-shadow: 0 6px 16px #0003; font-family: Inter, sans-serif; }
.toast .ti { width: 40px; height: 48px; stroke: none; margin-right: 8px; }
.toast div { flex: 1; }
.toast strong { display: block; font-size: 12px; line-height: 16px; font-weight: 600; color: #3a3a3a; }
.toast p { font-size: 10px; line-height: 12px; color: #747274; white-space: nowrap; }
.toast p svg { width: 13px; height: 9px; stroke-width: 1; }
.toast button { width: 19px; height: 19px; border-radius: 50%; border: 1px solid #b5b2b4; color: #444; }
.toast button svg { width: 8px; height: 8px; stroke-width: 3; }
```
